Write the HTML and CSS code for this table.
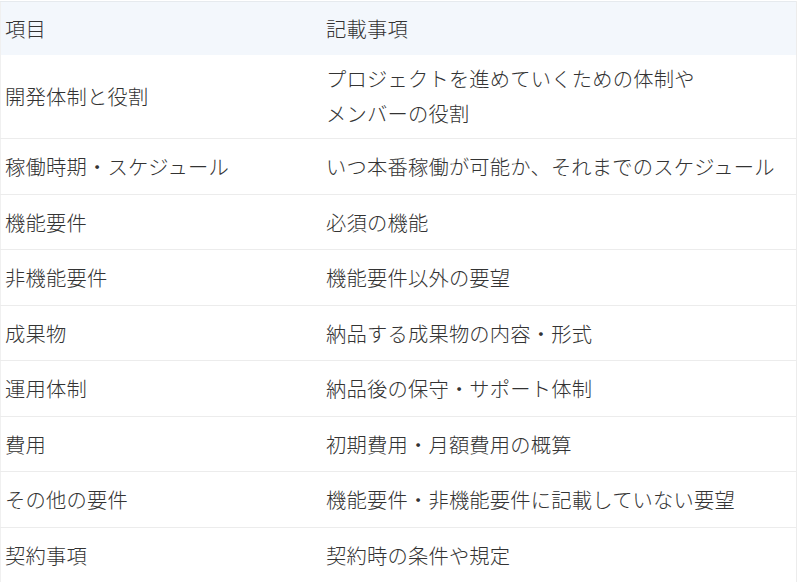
FILE: index.html
```html
<!DOCTYPE html>
<html lang="ja">
<head>
<meta charset="utf-8">
<title>記載事項</title>
<link rel="stylesheet" href="styles.css">
</head>
<body>
<table class="spec">
  <thead>
    <tr><th class="c1">項目</th><th class="c2">記載事項</th></tr>
  </thead>
  <tbody>
    <tr class="tall"><td>開発体制と役割</td><td>プロジェクトを進めていくための体制や<br>メンバーの役割</td></tr>
    <tr><td>稼働時期・スケジュール</td><td>いつ本番稼働が可能か、それまでのスケジュール</td></tr>
    <tr><td>機能要件</td><td>必須の機能</td></tr>
    <tr><td>非機能要件</td><td>機能要件以外の要望</td></tr>
    <tr><td>成果物</td><td>納品する成果物の内容・形式</td></tr>
    <tr><td>運用体制</td><td>納品後の保守・サポート体制</td></tr>
    <tr><td>費用</td><td>初期費用・月額費用の概算</td></tr>
    <tr><td>その他の要件</td><td>機能要件・非機能要件に記載していない要望</td></tr>
    <tr><td>契約事項</td><td>契約時の条件や規定</td></tr>
  </tbody>
</table>
</body>
</html>
```

FILE: styles.css
```css
html, body {
  margin: 0;
  padding: 0;
  background: #ffffff;
}
body {
  padding-top: 1px;
  font-family: "Noto Sans CJK JP", "Noto Sans", sans-serif;
  color: #333333;
  font-size: 20.3px;
  font-weight: 300;
  letter-spacing: 0.2px;
}
.spec {
  width: 797px;
  border-collapse: collapse;
  border-top: 1px solid #e6eaee;
  border-left: 1px solid #f0f0f0;
  border-right: 1px solid #ececec;
  table-layout: fixed;
}
.spec th {
  background: #f3f7fc;
  font-weight: 300;
  text-align: left;
  line-height: 35px;
  padding: 9px 4px;
}
.spec .c1 { width: 313px; }
.spec td {
  line-height: 35px;
  padding: 10px 4px 9.5px;
  border-top: 1px solid #ececec;
  vertical-align: middle;
}
.spec tr.tall td {
  padding: 6px 4px 7px;
}
.spec thead + tbody tr:first-child td {
  border-top: none;
}
```
